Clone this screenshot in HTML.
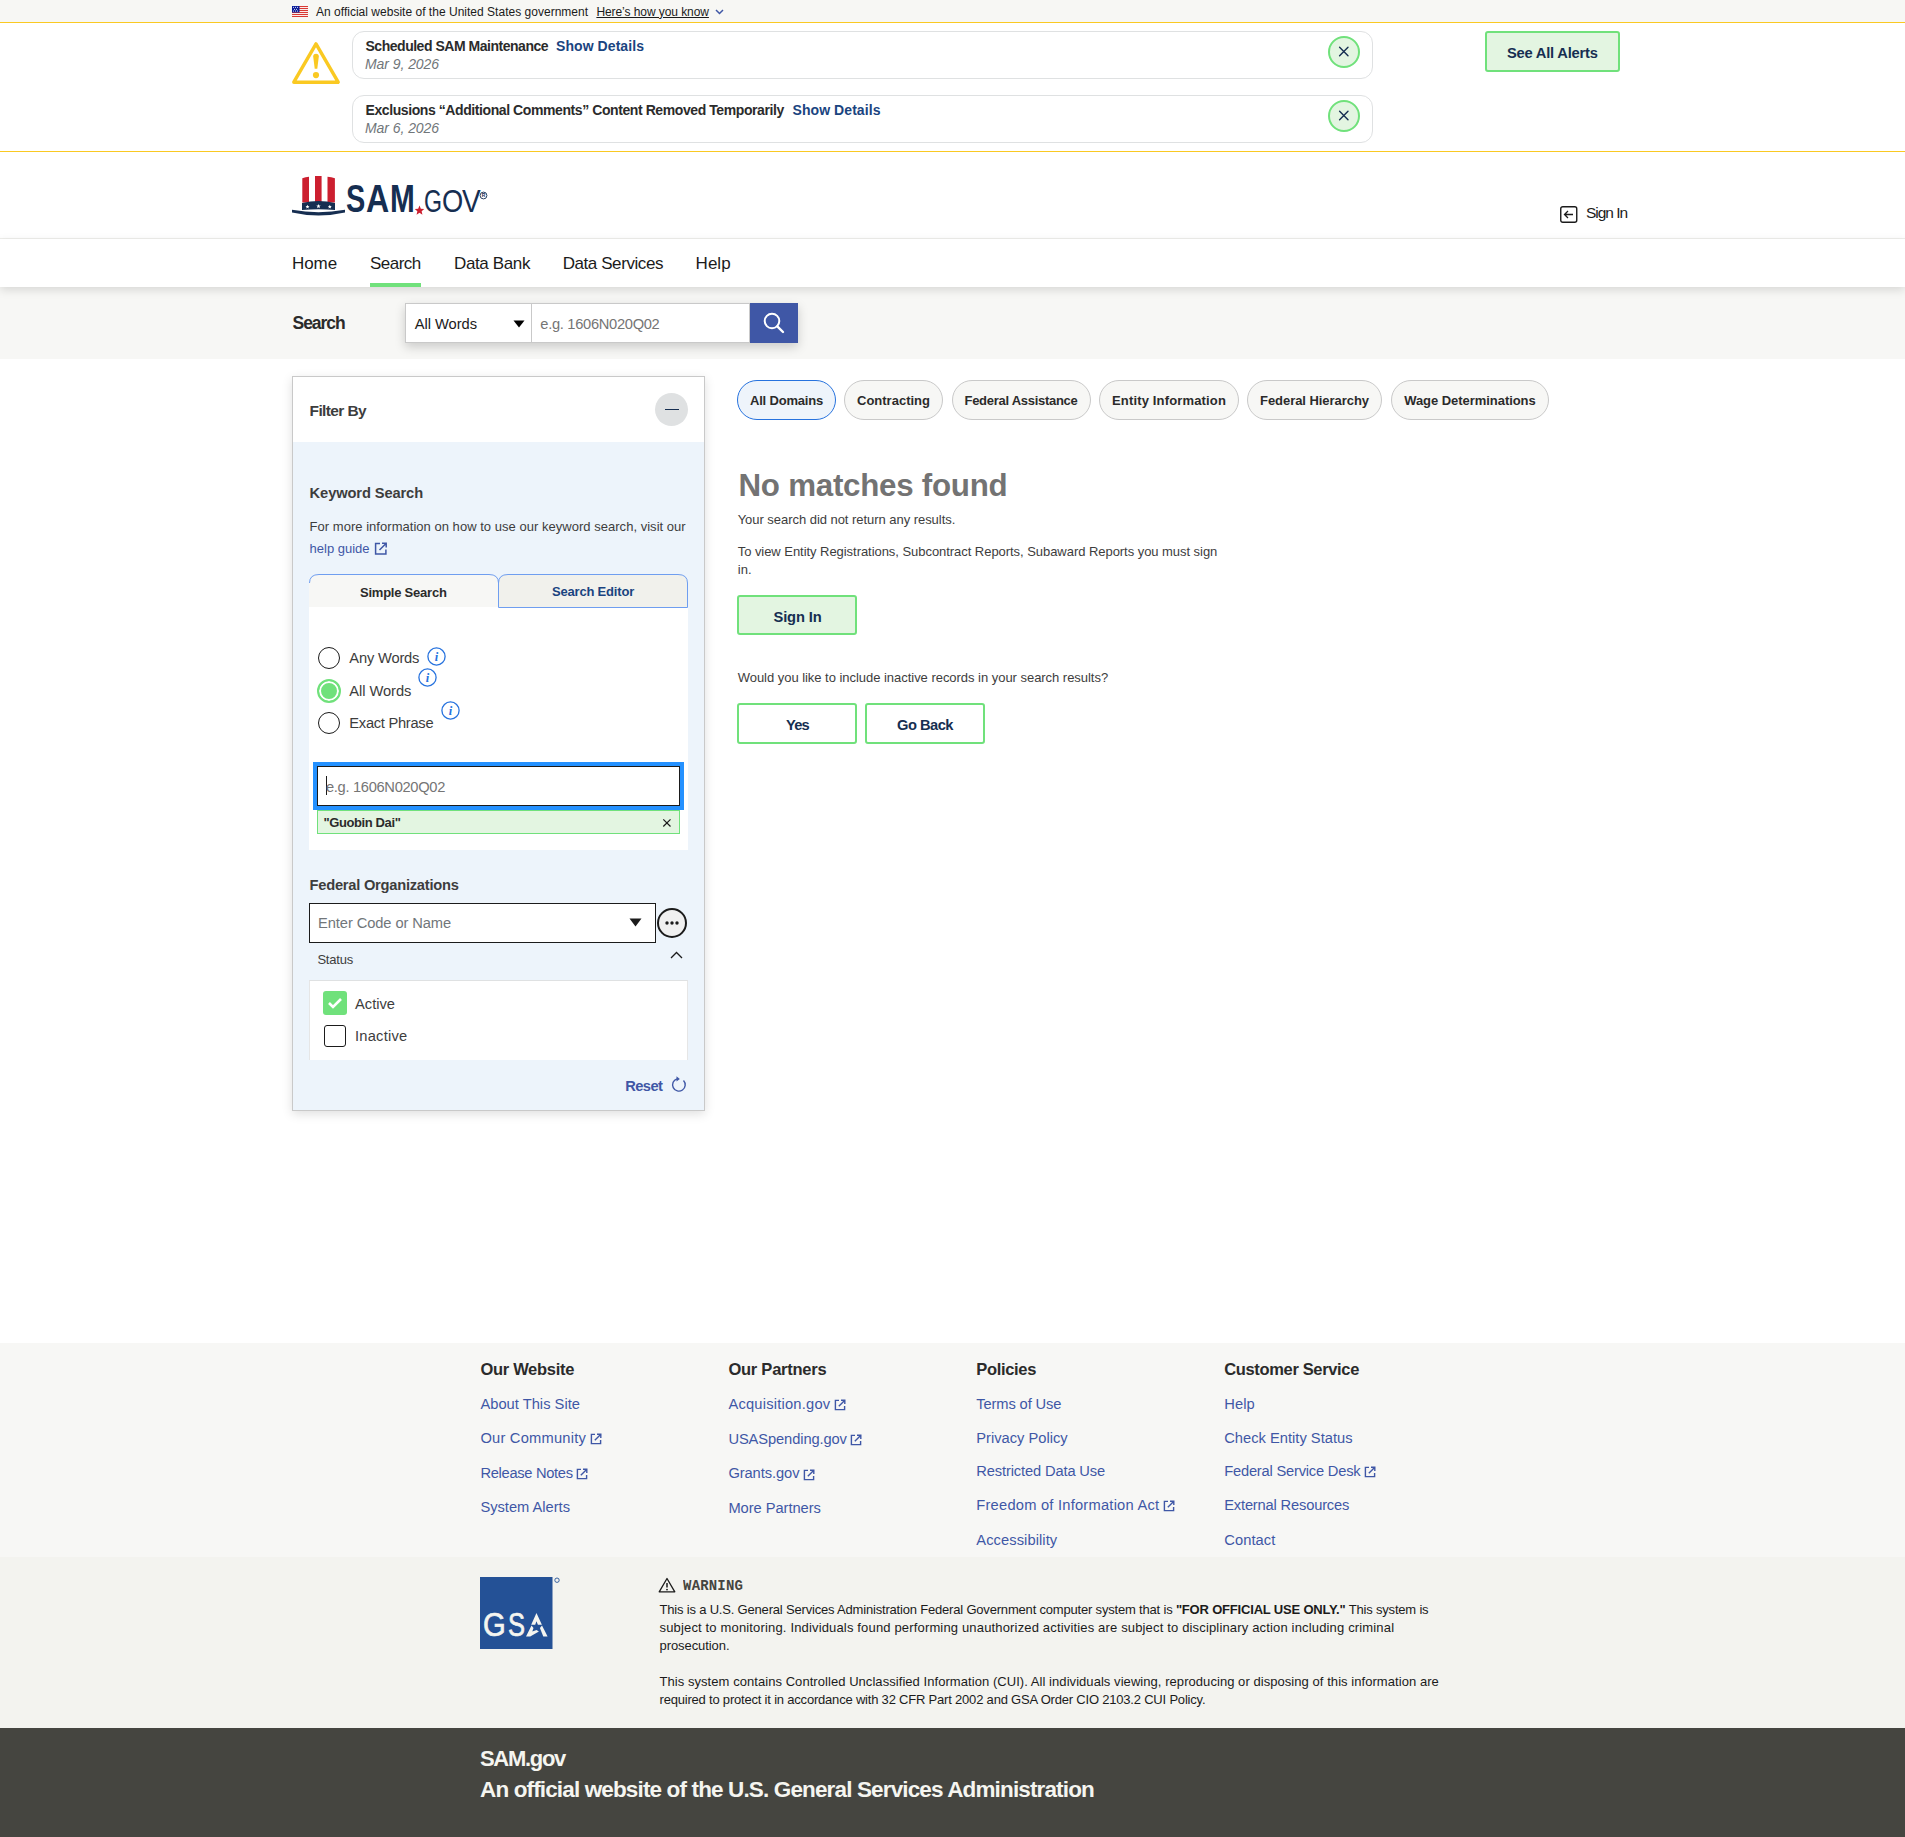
<!DOCTYPE html>
<html><head><meta charset="utf-8"><title>SAM.gov Search</title>
<style>
html,body{margin:0;padding:0;}
body{width:1905px;height:1837px;position:relative;overflow:hidden;background:#fff;font-family:"Liberation Sans",sans-serif;}
.t{position:absolute;white-space:nowrap;line-height:1;}
.r{position:absolute;display:block;}
</style></head><body>
<div class="r" style="left:0px;top:0px;width:1905px;height:22px;background:#f7f7f4"></div>
<div class="r" style="left:0px;top:22px;width:1905px;height:1px;background:#fac922"></div>
<svg class="r" style="left:292px;top:6px;" width="16" height="11" viewBox="0 0 16 11"><rect x="0" y="0" width="16" height="11" fill="#fff"/><rect x="0" y="0" width="16" height="1.1" fill="#d83933"/><rect x="0" y="2" width="16" height="1.1" fill="#d83933"/><rect x="0" y="4" width="16" height="1.1" fill="#d83933"/><rect x="0" y="6" width="16" height="1.1" fill="#d83933"/><rect x="0" y="8" width="16" height="1.1" fill="#d83933"/><rect x="0" y="10" width="16" height="1.1" fill="#d83933"/><rect x="0" y="0" width="7.5" height="6.5" fill="#0b1e9a"/><circle cx="1.5" cy="1.3" r="0.55" fill="#fff"/><circle cx="3.5" cy="1.3" r="0.55" fill="#fff"/><circle cx="5.5" cy="1.3" r="0.55" fill="#fff"/><circle cx="2.5" cy="3.2" r="0.55" fill="#fff"/><circle cx="4.5" cy="3.2" r="0.55" fill="#fff"/><circle cx="1.5" cy="5" r="0.55" fill="#fff"/><circle cx="3.5" cy="5" r="0.55" fill="#fff"/><circle cx="5.5" cy="5" r="0.55" fill="#fff"/></svg>
<div class="t " style="left:316.0px;top:5.8px;font-size:12px;font-weight:400;font-style:normal;font-family:'Liberation Sans',sans-serif;color:#1b1b1b;letter-spacing:0.016px;">An official website of the United States government</div>
<div class="t " style="left:596.4px;top:5.8px;font-size:12px;font-weight:400;font-style:normal;font-family:'Liberation Sans',sans-serif;color:#1b1b1b;letter-spacing:-0.070px;text-decoration:underline;text-underline-offset:1px">Here’s how you know</div>
<svg class="r" style="left:715px;top:9px;" width="9" height="6" viewBox="0 0 9 6"><path d="M1 1 L4.5 4.5 L8 1" stroke="#3f57a6" stroke-width="1.5" fill="none"/></svg>
<div class="r" style="left:0px;top:23px;width:1905px;height:128px;background:#fff"></div>
<div class="r" style="left:0px;top:151px;width:1905px;height:1px;background:#fac922"></div>
<svg class="r" style="left:290px;top:40px;" width="52" height="46" viewBox="0 0 52 46"><path d="M26 3.9 L48.2 42.2 L3.8 42.2 Z" stroke="#fac922" stroke-width="3.4" stroke-linejoin="round" fill="none"/><path d="M23.2 16.5 Q23.2 13.8 26 13.8 Q28.8 13.8 28.8 16.5 L27.3 28.7 L24.7 28.7 Z" fill="#fac922"/><circle cx="26" cy="35.1" r="3.1" fill="#fac922"/></svg>
<div class="r" style="left:352px;top:31px;width:1021px;height:48px;border:1px solid #dfe1e2;border-radius:12px;box-sizing:border-box;background:#fff"></div>
<div class="t " style="left:365.5px;top:39.1px;font-size:14px;font-weight:700;font-style:normal;font-family:'Liberation Sans',sans-serif;color:#2b2b2b;letter-spacing:-0.476px;">Scheduled SAM Maintenance</div>
<div class="t " style="left:556.0px;top:39.1px;font-size:14px;font-weight:700;font-style:normal;font-family:'Liberation Sans',sans-serif;color:#1a4480;letter-spacing:0.074px;">Show Details</div>
<div class="t " style="left:365.0px;top:57.1px;font-size:14px;font-weight:400;font-style:italic;font-family:'Liberation Sans',sans-serif;color:#71767a;letter-spacing:-0.061px;">Mar 9, 2026</div>
<div class="r" style="left:1328px;top:36px;width:32px;height:32px;border:2px solid #70e17b;border-radius:50%;box-sizing:border-box;background:#e3f5e1"></div>
<svg class="r" style="left:1338px;top:46px;" width="12" height="12" viewBox="0 0 12 12"><path d="M1.6 1.3 L10 9.7 M10 1.3 L1.6 9.7" stroke="#162e51" stroke-width="1.4" stroke-linecap="round"/></svg>
<div class="r" style="left:352px;top:95px;width:1021px;height:48px;border:1px solid #dfe1e2;border-radius:12px;box-sizing:border-box;background:#fff"></div>
<div class="t " style="left:365.5px;top:103.1px;font-size:14px;font-weight:700;font-style:normal;font-family:'Liberation Sans',sans-serif;color:#2b2b2b;letter-spacing:-0.414px;">Exclusions “Additional Comments” Content Removed Temporarily</div>
<div class="t " style="left:792.5px;top:103.1px;font-size:14px;font-weight:700;font-style:normal;font-family:'Liberation Sans',sans-serif;color:#1a4480;letter-spacing:0.074px;">Show Details</div>
<div class="t " style="left:365.0px;top:121.1px;font-size:14px;font-weight:400;font-style:italic;font-family:'Liberation Sans',sans-serif;color:#71767a;letter-spacing:-0.061px;">Mar 6, 2026</div>
<div class="r" style="left:1328px;top:100px;width:32px;height:32px;border:2px solid #70e17b;border-radius:50%;box-sizing:border-box;background:#e3f5e1"></div>
<svg class="r" style="left:1338px;top:110px;" width="12" height="12" viewBox="0 0 12 12"><path d="M1.6 1.3 L10 9.7 M10 1.3 L1.6 9.7" stroke="#162e51" stroke-width="1.4" stroke-linecap="round"/></svg>
<div class="r" style="left:1485px;top:31px;width:135px;height:41px;border:2px solid #70e17b;border-radius:3px;box-sizing:border-box;background:#e3f5e1"></div>
<div class="t " style="left:1507.0px;top:45.6px;font-size:14.7px;font-weight:700;font-style:normal;font-family:'Liberation Sans',sans-serif;color:#162e51;letter-spacing:-0.208px;">See All Alerts</div>
<svg class="r" style="left:292px;top:176px;" width="60" height="44" viewBox="0 0 60 44">
<path d="M10.3 2.2 Q13.5 1.2 17 0.8 L17 26.5 L10.3 26.5 Z" fill="#cc1f2f"/>
<path d="M23 0 L29.6 0 L29.6 26.5 L23 26.5 Z" fill="#cc1f2f"/>
<path d="M35.5 0.8 Q39.5 1.2 42.9 2.2 L42.9 26.5 L35.5 26.5 Z" fill="#cc1f2f"/>
<path d="M10 27 Q26.5 23 43 27 L43 34 Q26.5 32.5 10 34 Z" fill="#162e51"/>
<path d="M0 33.8 Q26.5 38.6 53 33.8 L53 36.6 Q26.5 42.6 0 36.6 Z" fill="#162e51"/>
<polygon points="15.50,28.70 16.06,30.04 17.50,30.15 16.40,31.09 16.73,32.50 15.50,31.75 14.27,32.50 14.60,31.09 13.50,30.15 14.94,30.04" fill="#fff"/><polygon points="26.50,28.00 27.11,29.46 28.69,29.59 27.48,30.62 27.85,32.16 26.50,31.34 25.15,32.16 25.52,30.62 24.31,29.59 25.89,29.46" fill="#fff"/><polygon points="37.80,28.70 38.36,30.04 39.80,30.15 38.70,31.09 39.03,32.50 37.80,31.75 36.57,32.50 36.90,31.09 35.80,30.15 37.24,30.04" fill="#fff"/></svg>
<div class="t" style="left:346.1px;top:180.1px;font-size:38.83px;font-weight:700;color:#162e51;transform:scaleX(0.745);transform-origin:0 0;">S</div>
<div class="t" style="left:366.0px;top:180.1px;font-size:38.83px;font-weight:700;color:#162e51;transform:scaleX(0.828);transform-origin:0 0;">A</div>
<div class="t" style="left:389.6px;top:180.1px;font-size:38.83px;font-weight:700;color:#162e51;transform:scaleX(0.767);transform-origin:0 0;">M</div>
<svg class="r" style="left:414px;top:205px;" width="11" height="11" viewBox="0 0 11 11"><polygon points="5.50,0.60 6.82,3.78 10.26,4.05 7.64,6.30 8.44,9.65 5.50,7.85 2.56,9.65 3.36,6.30 0.74,4.05 4.18,3.78" fill="#cc1f2f"/></svg>
<div class="t" style="left:424.0px;top:186.3px;font-size:31.56px;font-weight:400;color:#162e51;transform:scaleX(0.733);transform-origin:0 0;-webkit-text-stroke:0px">G</div>
<div class="t" style="left:442.3px;top:186.3px;font-size:31.56px;font-weight:400;color:#162e51;transform:scaleX(0.864);transform-origin:0 0;-webkit-text-stroke:0px">O</div>
<div class="t" style="left:462.3px;top:186.3px;font-size:31.56px;font-weight:400;color:#162e51;transform:scaleX(0.888);transform-origin:0 0;-webkit-text-stroke:0px">V</div>
<svg class="r" style="left:479px;top:191px;" width="9" height="9" viewBox="0 0 9 9"><circle cx="4.5" cy="4.5" r="3.4" stroke="#162e51" stroke-width="0.9" fill="none"/><text x="4.5" y="6.3" font-size="5" text-anchor="middle" fill="#162e51" font-family="Liberation Sans" font-weight="700">R</text></svg>
<svg class="r" style="left:1560px;top:206px;" width="18" height="17" viewBox="0 0 18 17"><rect x="0.75" y="0.75" width="16" height="15.5" rx="2" stroke="#1b1b1b" stroke-width="1.4" fill="none"/><path d="M13 8.5 L4.5 8.5 M8 5 L4.5 8.5 L8 12" stroke="#1b1b1b" stroke-width="1.3" fill="none"/></svg>
<div class="t " style="left:1586.0px;top:205.4px;font-size:15.5px;font-weight:400;font-style:normal;font-family:'Liberation Sans',sans-serif;color:#1b1b1b;letter-spacing:-1.040px;">Sign In</div>
<div class="r" style="left:0px;top:238px;width:1905px;height:1px;background:#efefec"></div>
<div class="r" style="left:0px;top:239px;width:1905px;height:48px;background:#fff;box-shadow:0 3px 9px rgba(0,0,0,0.13);z-index:2"></div>
<div class="t " style="left:292.0px;top:254.6px;font-size:17px;font-weight:400;font-style:normal;font-family:'Liberation Sans',sans-serif;color:#1b1b1b;letter-spacing:-0.086px;z-index:3">Home</div>
<div class="t " style="left:370.0px;top:254.6px;font-size:17px;font-weight:400;font-style:normal;font-family:'Liberation Sans',sans-serif;color:#1b1b1b;letter-spacing:-0.527px;z-index:3">Search</div>
<div class="t " style="left:454.0px;top:254.6px;font-size:17px;font-weight:400;font-style:normal;font-family:'Liberation Sans',sans-serif;color:#1b1b1b;letter-spacing:-0.375px;z-index:3">Data Bank</div>
<div class="t " style="left:562.7px;top:254.6px;font-size:17px;font-weight:400;font-style:normal;font-family:'Liberation Sans',sans-serif;color:#1b1b1b;letter-spacing:-0.424px;z-index:3">Data Services</div>
<div class="t " style="left:695.6px;top:254.6px;font-size:17px;font-weight:400;font-style:normal;font-family:'Liberation Sans',sans-serif;color:#1b1b1b;letter-spacing:0.008px;z-index:3">Help</div>
<div class="r" style="left:370px;top:283px;width:51px;height:4px;background:#70e17b;z-index:3"></div>
<div class="r" style="left:0px;top:287px;width:1905px;height:72px;background:#f7f7f5"></div>
<div class="t " style="left:292.6px;top:315.2px;font-size:17.5px;font-weight:700;font-style:normal;font-family:'Liberation Sans',sans-serif;color:#2b2b2b;letter-spacing:-1.062px;">Search</div>
<div class="r" style="left:405px;top:303px;width:393px;height:40px;box-shadow:0 4px 10px rgba(0,0,0,0.18)"></div>
<div class="r" style="left:405px;top:303px;width:127px;height:40px;background:#fff;border:1px solid #c9c9c9;box-sizing:border-box"></div>
<div class="t " style="left:414.7px;top:316.8px;font-size:14.7px;font-weight:400;font-style:normal;font-family:'Liberation Sans',sans-serif;color:#1b1b1b;letter-spacing:-0.031px;">All Words</div>
<svg class="r" style="left:513px;top:320px;" width="12" height="8" viewBox="0 0 12 8"><path d="M0.5 0.5 L11.5 0.5 L6 7.5 Z" fill="#000"/></svg>
<div class="r" style="left:531px;top:303px;width:219px;height:40px;background:#fff;border:1px solid #c9c9c9;box-sizing:border-box"></div>
<div class="t " style="left:540.3px;top:316.8px;font-size:14.7px;font-weight:400;font-style:normal;font-family:'Liberation Sans',sans-serif;color:#757575;letter-spacing:-0.310px;">e.g. 1606N020Q02</div>
<div class="r" style="left:750px;top:303px;width:48px;height:40px;background:#3f57a6"></div>
<svg class="r" style="left:762px;top:311px;" width="24" height="24" viewBox="0 0 24 24"><circle cx="10" cy="10" r="7.3" stroke="#fff" stroke-width="2" fill="none"/><path d="M15.3 15.3 L21 21" stroke="#fff" stroke-width="2.4" stroke-linecap="round"/></svg>
<div class="r" style="left:292px;top:376px;width:413px;height:735px;border:1px solid #c9c9c9;box-sizing:border-box;background:#edf4fb;box-shadow:0 3px 10px rgba(0,0,0,0.13)"></div>
<div class="r" style="left:293px;top:377px;width:411px;height:65px;background:#fff"></div>
<div class="t " style="left:309.6px;top:403.1px;font-size:15.5px;font-weight:700;font-style:normal;font-family:'Liberation Sans',sans-serif;color:#3d3d3d;letter-spacing:-0.626px;">Filter By</div>
<div class="r" style="left:655px;top:393px;width:33px;height:33px;background:#dfe1e2;border-radius:50%"></div>
<div class="r" style="left:665px;top:408.5px;width:14px;height:1.6px;background:#162e51"></div>
<div class="t " style="left:309.6px;top:486.1px;font-size:14.7px;font-weight:700;font-style:normal;font-family:'Liberation Sans',sans-serif;color:#3d3d3d;letter-spacing:-0.122px;">Keyword Search</div>
<div class="t " style="left:309.6px;top:520.0px;font-size:13px;font-weight:400;font-style:normal;font-family:'Liberation Sans',sans-serif;color:#3d3d3d;letter-spacing:0.029px;">For more information on how to use our keyword search, visit our</div>
<div class="t " style="left:309.6px;top:542.0px;font-size:13px;font-weight:400;font-style:normal;font-family:'Liberation Sans',sans-serif;color:#3f57a6;letter-spacing:-0.003px;">help guide</div>
<svg class="r" style="left:374px;top:542px;" width="14" height="14" viewBox="0 0 14 14"><path d="M6 1.6 L1.6 1.6 L1.6 11.9 L11.9 11.9 L11.9 7.5" stroke="#3f57a6" stroke-width="1.5" fill="none"/><path d="M5.5 8 L12 1.5 M8 1.3 L12.2 1.3 L12.2 5.5" stroke="#3f57a6" stroke-width="1.5" fill="none"/></svg>
<div class="r" style="left:309px;top:574px;width:190px;height:34px;background:#f7f7f5;border-radius:10px 10px 0 0"></div>
<div class="r" style="left:498px;top:574px;width:190px;height:34px;background:#f1f1ec;border-radius:10px 10px 0 0"></div>
<div class="t " style="left:360.0px;top:586.0px;font-size:13px;font-weight:700;font-style:normal;font-family:'Liberation Sans',sans-serif;color:#2b2b2b;letter-spacing:-0.231px;">Simple Search</div>
<div class="t " style="left:552.0px;top:585.3px;font-size:13px;font-weight:700;font-style:normal;font-family:'Liberation Sans',sans-serif;color:#1a4480;letter-spacing:-0.195px;">Search Editor</div>
<div class="r" style="left:309px;top:607px;width:379px;height:243px;background:#fff"></div>
<svg class="r" style="left:300px;top:565px;" width="400" height="50" viewBox="0 0 400 50"><path d="M9.5 18 Q9.5 9.5 19 9.5 L189 9.5 Q198.5 9.5 198.5 18 L198.5 42.5 L387.5 42.5 L387.5 18 Q387.5 9.5 378 9.5 L208 9.5 Q198.5 9.5 198.5 18" stroke="#6f9ef0" stroke-width="1" fill="none"/></svg>
<div class="r" style="left:318px;top:646.8px;width:22px;height:22px;border:1.5px solid #1b1b1b;border-radius:50%;box-sizing:border-box;background:#fff"></div>
<div class="t " style="left:349.3px;top:650.7px;font-size:14.7px;font-weight:400;font-style:normal;font-family:'Liberation Sans',sans-serif;color:#3d3d3d;letter-spacing:-0.174px;">Any Words</div>
<svg class="r" style="left:426.9px;top:646.7px;" width="19" height="19" viewBox="0 0 19 19"><circle cx="9.5" cy="9.5" r="8.6" stroke="#2672de" stroke-width="1.3" fill="none"/><text x="9.5" y="14.2" font-size="12.5" font-style="italic" font-weight="700" text-anchor="middle" fill="#2672de" font-family="Liberation Serif">i</text></svg>
<div class="r" style="left:317px;top:678.8px;width:24px;height:24px;border:2px solid #70e17b;border-radius:50%;box-sizing:border-box;background:#70e17b;box-shadow:inset 0 0 0 2px #fff"></div>
<div class="t " style="left:349.3px;top:683.7px;font-size:14.7px;font-weight:400;font-style:normal;font-family:'Liberation Sans',sans-serif;color:#3d3d3d;letter-spacing:-0.064px;">All Words</div>
<svg class="r" style="left:418.3px;top:667.9px;" width="19" height="19" viewBox="0 0 19 19"><circle cx="9.5" cy="9.5" r="8.6" stroke="#2672de" stroke-width="1.3" fill="none"/><text x="9.5" y="14.2" font-size="12.5" font-style="italic" font-weight="700" text-anchor="middle" fill="#2672de" font-family="Liberation Serif">i</text></svg>
<div class="r" style="left:318px;top:712.2px;width:22px;height:22px;border:1.5px solid #1b1b1b;border-radius:50%;box-sizing:border-box;background:#fff"></div>
<div class="t " style="left:349.3px;top:716.1px;font-size:14.7px;font-weight:400;font-style:normal;font-family:'Liberation Sans',sans-serif;color:#3d3d3d;letter-spacing:-0.280px;">Exact Phrase</div>
<svg class="r" style="left:440.7px;top:700.5px;" width="19" height="19" viewBox="0 0 19 19"><circle cx="9.5" cy="9.5" r="8.6" stroke="#2672de" stroke-width="1.3" fill="none"/><text x="9.5" y="14.2" font-size="12.5" font-style="italic" font-weight="700" text-anchor="middle" fill="#2672de" font-family="Liberation Serif">i</text></svg>
<div class="r" style="left:313px;top:762px;width:371px;height:48px;border:4px solid #2491ff;box-sizing:border-box"></div>
<div class="r" style="left:317px;top:766px;width:363px;height:40px;border:1px solid #1b1b1b;box-sizing:border-box;background:#fff"></div>
<div class="r" style="left:326px;top:776px;width:1px;height:19px;background:#1b1b1b"></div>
<div class="t " style="left:326.0px;top:779.9px;font-size:14.7px;font-weight:400;font-style:normal;font-family:'Liberation Sans',sans-serif;color:#757575;letter-spacing:-0.322px;">e.g. 1606N020Q02</div>
<div class="r" style="left:317px;top:810px;width:363px;height:24px;background:#e3f5e1;border:1px solid #70e17b;box-sizing:border-box"></div>
<div class="t " style="left:323.4px;top:816.0px;font-size:13px;font-weight:700;font-style:normal;font-family:'Liberation Sans',sans-serif;color:#2b2b2b;letter-spacing:-0.385px;">&quot;Guobin Dai&quot;</div>
<svg class="r" style="left:662px;top:818px;" width="10" height="10" viewBox="0 0 10 10"><path d="M1.3 1.3 L8.5 8.5 M8.5 1.3 L1.3 8.5" stroke="#1b1b1b" stroke-width="1.2"/></svg>
<div class="t " style="left:309.6px;top:877.6px;font-size:14.7px;font-weight:700;font-style:normal;font-family:'Liberation Sans',sans-serif;color:#3d3d3d;letter-spacing:-0.250px;">Federal Organizations</div>
<div class="r" style="left:309px;top:903px;width:347px;height:40px;background:#fff;border:1px solid #1b1b1b;box-sizing:border-box"></div>
<div class="t " style="left:318.1px;top:916.4px;font-size:14.7px;font-weight:400;font-style:normal;font-family:'Liberation Sans',sans-serif;color:#71767a;letter-spacing:-0.095px;">Enter Code or Name</div>
<svg class="r" style="left:629px;top:918px;" width="13" height="9" viewBox="0 0 13 9"><path d="M0.5 0.5 L12.5 0.5 L6.5 8.5 Z" fill="#1b1b1b"/></svg>
<div class="r" style="left:657px;top:908px;width:30px;height:30px;border:2px solid #1b1b1b;border-radius:50%;box-sizing:border-box;background:#f0f0f0"></div>
<svg class="r" style="left:664px;top:920px;" width="16" height="6" viewBox="0 0 16 6"><circle cx="3" cy="3" r="1.7" fill="#1b1b1b"/><circle cx="8" cy="3" r="1.7" fill="#1b1b1b"/><circle cx="13" cy="3" r="1.7" fill="#1b1b1b"/></svg>
<div class="t " style="left:317.4px;top:953.0px;font-size:13px;font-weight:400;font-style:normal;font-family:'Liberation Sans',sans-serif;color:#3d3d3d;letter-spacing:-0.210px;">Status</div>
<svg class="r" style="left:670px;top:951px;" width="13" height="8" viewBox="0 0 13 8"><path d="M1 7 L6.5 1.5 L12 7" stroke="#1b1b1b" stroke-width="1.3" fill="none"/></svg>
<div class="r" style="left:309px;top:980px;width:379px;height:80px;background:#fff;border-top:1px solid #dfe1e2;border-left:1px solid #e6e6e6;border-right:1px solid #e6e6e6;box-sizing:border-box"></div>
<div class="r" style="left:323px;top:991px;width:24px;height:24px;background:#70e17b;border-radius:3px"></div>
<svg class="r" style="left:326px;top:995px;" width="18" height="16" viewBox="0 0 18 16"><path d="M3 8 L7 12 L15 4" stroke="#fff" stroke-width="2.6" fill="none"/></svg>
<div class="t " style="left:355.0px;top:996.6px;font-size:14.7px;font-weight:400;font-style:normal;font-family:'Liberation Sans',sans-serif;color:#3d3d3d;letter-spacing:0.000px;">Active</div>
<div class="r" style="left:324px;top:1025px;width:22px;height:22px;border:1.5px solid #1b1b1b;border-radius:3px;box-sizing:border-box;background:#fff"></div>
<div class="t " style="left:355.0px;top:1028.9px;font-size:14.7px;font-weight:400;font-style:normal;font-family:'Liberation Sans',sans-serif;color:#3d3d3d;letter-spacing:0.234px;">Inactive</div>
<div class="t " style="left:625.3px;top:1078.6px;font-size:14.7px;font-weight:700;font-style:normal;font-family:'Liberation Sans',sans-serif;color:#3f57a6;letter-spacing:-0.603px;">Reset</div>
<svg class="r" style="left:670px;top:1076px;" width="18" height="18" viewBox="0 0 18 18"><path d="M13.5 4.5 A6.3 6.3 0 1 1 7 2.8" stroke="#3f57a6" stroke-width="1.4" fill="none"/><path d="M6.5 0.3 L9.8 2.9 L6.5 5.5 Z" fill="#3f57a6"/></svg>
<div class="r" style="left:737px;top:380px;width:99px;height:40px;border:1px solid #2672de;border-radius:20px;box-sizing:border-box;background:#eef4fb"></div>
<div class="t " style="left:750.0px;top:394.3px;font-size:13px;font-weight:700;font-style:normal;font-family:'Liberation Sans',sans-serif;color:#2b2b2b;letter-spacing:-0.193px;">All Domains</div>
<div class="r" style="left:844px;top:380px;width:99px;height:40px;border:1px solid #c9c9c9;border-radius:20px;box-sizing:border-box;background:#f7f7f5"></div>
<div class="t " style="left:857.0px;top:394.3px;font-size:13px;font-weight:700;font-style:normal;font-family:'Liberation Sans',sans-serif;color:#2b2b2b;letter-spacing:0.006px;">Contracting</div>
<div class="r" style="left:951.5px;top:380px;width:139px;height:40px;border:1px solid #c9c9c9;border-radius:20px;box-sizing:border-box;background:#f7f7f5"></div>
<div class="t " style="left:964.5px;top:394.3px;font-size:13px;font-weight:700;font-style:normal;font-family:'Liberation Sans',sans-serif;color:#2b2b2b;letter-spacing:-0.280px;">Federal Assistance</div>
<div class="r" style="left:1099px;top:380px;width:140px;height:40px;border:1px solid #c9c9c9;border-radius:20px;box-sizing:border-box;background:#f7f7f5"></div>
<div class="t " style="left:1112.0px;top:394.3px;font-size:13px;font-weight:700;font-style:normal;font-family:'Liberation Sans',sans-serif;color:#2b2b2b;letter-spacing:0.155px;">Entity Information</div>
<div class="r" style="left:1247px;top:380px;width:135px;height:40px;border:1px solid #c9c9c9;border-radius:20px;box-sizing:border-box;background:#f7f7f5"></div>
<div class="t " style="left:1260.0px;top:394.3px;font-size:13px;font-weight:700;font-style:normal;font-family:'Liberation Sans',sans-serif;color:#2b2b2b;letter-spacing:-0.051px;">Federal Hierarchy</div>
<div class="r" style="left:1391px;top:380px;width:158px;height:40px;border:1px solid #c9c9c9;border-radius:20px;box-sizing:border-box;background:#f7f7f5"></div>
<div class="t " style="left:1404.2px;top:394.3px;font-size:13px;font-weight:700;font-style:normal;font-family:'Liberation Sans',sans-serif;color:#2b2b2b;letter-spacing:-0.049px;">Wage Determinations</div>
<div class="t " style="left:738.5px;top:469.5px;font-size:31.3px;font-weight:700;font-style:normal;font-family:'Liberation Sans',sans-serif;color:#737373;letter-spacing:-0.252px;">No matches found</div>
<div class="t " style="left:737.7px;top:513.0px;font-size:13px;font-weight:400;font-style:normal;font-family:'Liberation Sans',sans-serif;color:#3d3d3d;letter-spacing:-0.042px;">Your search did not return any results.</div>
<div class="t " style="left:737.7px;top:545.0px;font-size:13px;font-weight:400;font-style:normal;font-family:'Liberation Sans',sans-serif;color:#3d3d3d;letter-spacing:-0.047px;">To view Entity Registrations, Subcontract Reports, Subaward Reports you must sign</div>
<div class="t " style="left:737.7px;top:562.7px;font-size:13px;font-weight:400;font-style:normal;font-family:'Liberation Sans',sans-serif;color:#3d3d3d;letter-spacing:0.089px;">in.</div>
<div class="r" style="left:737px;top:595px;width:120px;height:40px;border:2px solid #70e17b;border-radius:3px;box-sizing:border-box;background:#e3f5e1"></div>
<div class="t " style="left:773.5px;top:609.6px;font-size:14.7px;font-weight:700;font-style:normal;font-family:'Liberation Sans',sans-serif;color:#162e51;letter-spacing:-0.134px;">Sign In</div>
<div class="t " style="left:737.7px;top:670.5px;font-size:13px;font-weight:400;font-style:normal;font-family:'Liberation Sans',sans-serif;color:#3d3d3d;letter-spacing:-0.033px;">Would you like to include inactive records in your search results?</div>
<div class="r" style="left:737px;top:703px;width:120px;height:41px;border:2px solid #70e17b;border-radius:3px;box-sizing:border-box;background:#fff"></div>
<div class="t " style="left:786.0px;top:718.1px;font-size:14.7px;font-weight:700;font-style:normal;font-family:'Liberation Sans',sans-serif;color:#162e51;letter-spacing:-0.776px;">Yes</div>
<div class="r" style="left:865px;top:703px;width:120px;height:41px;border:2px solid #70e17b;border-radius:3px;box-sizing:border-box;background:#fff"></div>
<div class="t " style="left:897.0px;top:718.1px;font-size:14.7px;font-weight:700;font-style:normal;font-family:'Liberation Sans',sans-serif;color:#162e51;letter-spacing:-0.513px;">Go Back</div>
<div class="r" style="left:0px;top:1343px;width:1905px;height:214px;background:#f7f7f5"></div>
<div class="t " style="left:480.4px;top:1360.8px;font-size:16.5px;font-weight:700;font-style:normal;font-family:'Liberation Sans',sans-serif;color:#2b2b2b;letter-spacing:-0.296px;">Our Website</div>
<div class="t " style="left:480.4px;top:1397.0px;font-size:14.7px;font-weight:400;font-style:normal;font-family:'Liberation Sans',sans-serif;color:#3f57a6;letter-spacing:0.017px;">About This Site</div>
<div class="t " style="left:480.4px;top:1431.0px;font-size:14.7px;font-weight:400;font-style:normal;font-family:'Liberation Sans',sans-serif;color:#3f57a6;letter-spacing:0.220px;">Our Community</div>
<svg class="r" style="left:589.6px;top:1433.2px;" width="12" height="12" viewBox="0 0 12 12"><path d="M5 1.4 L1.4 1.4 L1.4 10.6 L10.6 10.6 L10.6 7" stroke="#3f57a6" stroke-width="1.4" fill="none"/><path d="M4.8 7.2 L10.6 1.4 M7 1.2 L10.8 1.2 L10.8 5" stroke="#3f57a6" stroke-width="1.4" fill="none"/></svg>
<div class="t " style="left:480.4px;top:1465.6px;font-size:14.7px;font-weight:400;font-style:normal;font-family:'Liberation Sans',sans-serif;color:#3f57a6;letter-spacing:-0.305px;">Release Notes</div>
<svg class="r" style="left:576.3px;top:1467.8px;" width="12" height="12" viewBox="0 0 12 12"><path d="M5 1.4 L1.4 1.4 L1.4 10.6 L10.6 10.6 L10.6 7" stroke="#3f57a6" stroke-width="1.4" fill="none"/><path d="M4.8 7.2 L10.6 1.4 M7 1.2 L10.8 1.2 L10.8 5" stroke="#3f57a6" stroke-width="1.4" fill="none"/></svg>
<div class="t " style="left:480.4px;top:1500.4px;font-size:14.7px;font-weight:400;font-style:normal;font-family:'Liberation Sans',sans-serif;color:#3f57a6;letter-spacing:-0.014px;">System Alerts</div>
<div class="t " style="left:728.4px;top:1360.8px;font-size:16.5px;font-weight:700;font-style:normal;font-family:'Liberation Sans',sans-serif;color:#2b2b2b;letter-spacing:-0.237px;">Our Partners</div>
<div class="t " style="left:728.4px;top:1397.0px;font-size:14.7px;font-weight:400;font-style:normal;font-family:'Liberation Sans',sans-serif;color:#3f57a6;letter-spacing:0.212px;">Acquisition.gov</div>
<svg class="r" style="left:833.9px;top:1399.2px;" width="12" height="12" viewBox="0 0 12 12"><path d="M5 1.4 L1.4 1.4 L1.4 10.6 L10.6 10.6 L10.6 7" stroke="#3f57a6" stroke-width="1.4" fill="none"/><path d="M4.8 7.2 L10.6 1.4 M7 1.2 L10.8 1.2 L10.8 5" stroke="#3f57a6" stroke-width="1.4" fill="none"/></svg>
<div class="t " style="left:728.4px;top:1431.6px;font-size:14.7px;font-weight:400;font-style:normal;font-family:'Liberation Sans',sans-serif;color:#3f57a6;letter-spacing:-0.104px;">USASpending.gov</div>
<svg class="r" style="left:850.4px;top:1433.8px;" width="12" height="12" viewBox="0 0 12 12"><path d="M5 1.4 L1.4 1.4 L1.4 10.6 L10.6 10.6 L10.6 7" stroke="#3f57a6" stroke-width="1.4" fill="none"/><path d="M4.8 7.2 L10.6 1.4 M7 1.2 L10.8 1.2 L10.8 5" stroke="#3f57a6" stroke-width="1.4" fill="none"/></svg>
<div class="t " style="left:728.4px;top:1466.4px;font-size:14.7px;font-weight:400;font-style:normal;font-family:'Liberation Sans',sans-serif;color:#3f57a6;letter-spacing:-0.084px;">Grants.gov</div>
<svg class="r" style="left:802.9px;top:1468.6px;" width="12" height="12" viewBox="0 0 12 12"><path d="M5 1.4 L1.4 1.4 L1.4 10.6 L10.6 10.6 L10.6 7" stroke="#3f57a6" stroke-width="1.4" fill="none"/><path d="M4.8 7.2 L10.6 1.4 M7 1.2 L10.8 1.2 L10.8 5" stroke="#3f57a6" stroke-width="1.4" fill="none"/></svg>
<div class="t " style="left:728.4px;top:1501.3px;font-size:14.7px;font-weight:400;font-style:normal;font-family:'Liberation Sans',sans-serif;color:#3f57a6;letter-spacing:-0.051px;">More Partners</div>
<div class="t " style="left:976.3px;top:1360.8px;font-size:16.5px;font-weight:700;font-style:normal;font-family:'Liberation Sans',sans-serif;color:#2b2b2b;letter-spacing:-0.329px;">Policies</div>
<div class="t " style="left:976.3px;top:1397.0px;font-size:14.7px;font-weight:400;font-style:normal;font-family:'Liberation Sans',sans-serif;color:#3f57a6;letter-spacing:-0.126px;">Terms of Use</div>
<div class="t " style="left:976.3px;top:1431.0px;font-size:14.7px;font-weight:400;font-style:normal;font-family:'Liberation Sans',sans-serif;color:#3f57a6;letter-spacing:-0.002px;">Privacy Policy</div>
<div class="t " style="left:976.3px;top:1463.6px;font-size:14.7px;font-weight:400;font-style:normal;font-family:'Liberation Sans',sans-serif;color:#3f57a6;letter-spacing:-0.139px;">Restricted Data Use</div>
<div class="t " style="left:976.3px;top:1497.6px;font-size:14.7px;font-weight:400;font-style:normal;font-family:'Liberation Sans',sans-serif;color:#3f57a6;letter-spacing:0.225px;">Freedom of Information Act</div>
<svg class="r" style="left:1162.8px;top:1499.8px;" width="12" height="12" viewBox="0 0 12 12"><path d="M5 1.4 L1.4 1.4 L1.4 10.6 L10.6 10.6 L10.6 7" stroke="#3f57a6" stroke-width="1.4" fill="none"/><path d="M4.8 7.2 L10.6 1.4 M7 1.2 L10.8 1.2 L10.8 5" stroke="#3f57a6" stroke-width="1.4" fill="none"/></svg>
<div class="t " style="left:976.3px;top:1532.6px;font-size:14.7px;font-weight:400;font-style:normal;font-family:'Liberation Sans',sans-serif;color:#3f57a6;letter-spacing:0.077px;">Accessibility</div>
<div class="t " style="left:1224.2px;top:1360.8px;font-size:16.5px;font-weight:700;font-style:normal;font-family:'Liberation Sans',sans-serif;color:#2b2b2b;letter-spacing:-0.343px;">Customer Service</div>
<div class="t " style="left:1224.2px;top:1397.0px;font-size:14.7px;font-weight:400;font-style:normal;font-family:'Liberation Sans',sans-serif;color:#3f57a6;letter-spacing:0.095px;">Help</div>
<div class="t " style="left:1224.2px;top:1431.0px;font-size:14.7px;font-weight:400;font-style:normal;font-family:'Liberation Sans',sans-serif;color:#3f57a6;letter-spacing:0.012px;">Check Entity Status</div>
<div class="t " style="left:1224.2px;top:1463.6px;font-size:14.7px;font-weight:400;font-style:normal;font-family:'Liberation Sans',sans-serif;color:#3f57a6;letter-spacing:-0.206px;">Federal Service Desk</div>
<svg class="r" style="left:1364.0px;top:1465.8px;" width="12" height="12" viewBox="0 0 12 12"><path d="M5 1.4 L1.4 1.4 L1.4 10.6 L10.6 10.6 L10.6 7" stroke="#3f57a6" stroke-width="1.4" fill="none"/><path d="M4.8 7.2 L10.6 1.4 M7 1.2 L10.8 1.2 L10.8 5" stroke="#3f57a6" stroke-width="1.4" fill="none"/></svg>
<div class="t " style="left:1224.2px;top:1497.6px;font-size:14.7px;font-weight:400;font-style:normal;font-family:'Liberation Sans',sans-serif;color:#3f57a6;letter-spacing:-0.177px;">External Resources</div>
<div class="t " style="left:1224.2px;top:1532.6px;font-size:14.7px;font-weight:400;font-style:normal;font-family:'Liberation Sans',sans-serif;color:#3f57a6;letter-spacing:0.096px;">Contact</div>
<div class="r" style="left:0px;top:1557px;width:1905px;height:171px;background:#f3f3ef"></div>
<svg class="r" style="left:480px;top:1577px;" width="80" height="72" viewBox="0 0 80 72"><rect x="0" y="0" width="72.5" height="72" fill="#245196"/><circle cx="77" cy="3.2" r="2.2" stroke="#245196" stroke-width="0.9" fill="none"/><polygon fill="#f5f5f0" points="56.46,36.05 61.9,47.7 57.9,47.7 56.46,44.2 55.2,47.7 51.2,47.7"/><polygon fill="#f5f5f0" points="51.5,48.6 53.5,50.9 52.3,54.5 56.5,53.1 58.9,54.5 50.2,59.6 46.0,59.6"/><polygon fill="#f5f5f0" points="62.0,48.6 59.9,50.9 63.3,59.6 67.6,59.6"/></svg>
<div class="t" style="left:483.4px;top:1608.7px;font-size:32.96px;font-weight:400;color:#f5f5f0;transform:scaleX(0.886);transform-origin:0 0;-webkit-text-stroke:0.7px #f5f5f0">G</div>
<div class="t" style="left:508.3px;top:1608.7px;font-size:32.96px;font-weight:400;color:#f5f5f0;transform:scaleX(0.773);transform-origin:0 0;-webkit-text-stroke:0.7px #f5f5f0">S</div>
<svg class="r" style="left:658px;top:1577px;" width="18" height="16" viewBox="0 0 18 16"><path d="M9 1.5 L16.8 14.8 L1.2 14.8 Z" stroke="#1b1b1b" stroke-width="1.3" fill="none" stroke-linejoin="round"/><path d="M9 6 L9 10.5" stroke="#1b1b1b" stroke-width="1.5"/><circle cx="9" cy="12.6" r="0.9" fill="#1b1b1b"/></svg>
<div class="t " style="left:683.1px;top:1579.1px;font-size:14px;font-weight:700;font-style:normal;font-family:'Liberation Mono',monospace;color:#454540;letter-spacing:0.165px;transform:scaleY(1.1);transform-origin:0 80%">WARNING</div>
<div class="t" style="left:659.5px;top:1603.0px;font-size:13px;color:#1b1b1b;letter-spacing:-0.187px">This is a U.S. General Services Administration Federal Government computer system that is <b>&quot;FOR OFFICIAL USE ONLY.&quot;</b> This system is</div>
<div class="t " style="left:659.5px;top:1621.0px;font-size:13px;font-weight:400;font-style:normal;font-family:'Liberation Sans',sans-serif;color:#1b1b1b;letter-spacing:0.161px;">subject to monitoring. Individuals found performing unauthorized activities are subject to disciplinary action including criminal</div>
<div class="t " style="left:659.5px;top:1639.0px;font-size:13px;font-weight:400;font-style:normal;font-family:'Liberation Sans',sans-serif;color:#1b1b1b;letter-spacing:-0.070px;">prosecution.</div>
<div class="t " style="left:659.5px;top:1675.2px;font-size:13px;font-weight:400;font-style:normal;font-family:'Liberation Sans',sans-serif;color:#1b1b1b;letter-spacing:0.056px;">This system contains Controlled Unclassified Information (CUI). All individuals viewing, reproducing or disposing of this information are</div>
<div class="t " style="left:659.5px;top:1693.0px;font-size:13px;font-weight:400;font-style:normal;font-family:'Liberation Sans',sans-serif;color:#1b1b1b;letter-spacing:-0.200px;">required to protect it in accordance with 32 CFR Part 2002 and GSA Order CIO 2103.2 CUI Policy.</div>
<div class="r" style="left:0px;top:1728px;width:1905px;height:109px;background:#454540"></div>
<div class="t " style="left:480.0px;top:1748.4px;font-size:22px;font-weight:700;font-style:normal;font-family:'Liberation Sans',sans-serif;color:#f5f5f0;letter-spacing:-1.301px;">SAM.gov</div>
<div class="t " style="left:480.0px;top:1779.0px;font-size:22.5px;font-weight:700;font-style:normal;font-family:'Liberation Sans',sans-serif;color:#f5f5f0;letter-spacing:-0.860px;">An official website of the U.S. General Services Administration</div>
</body></html>
